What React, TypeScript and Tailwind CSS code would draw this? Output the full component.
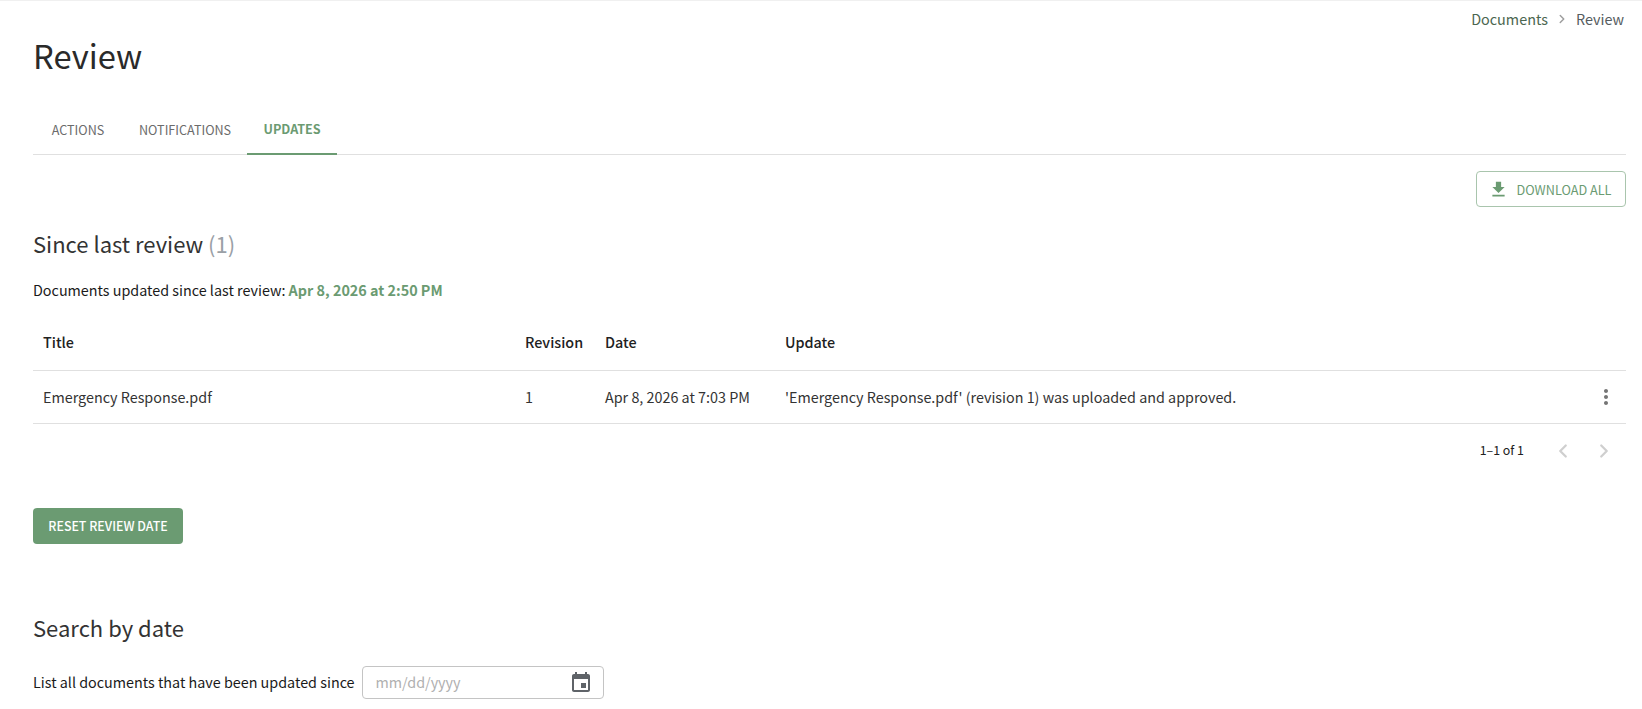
import { ChevronLeft, ChevronRight } from 'lucide-react'

const font = { fontFamily: '"Noto Sans CJK SC", "Source Sans Pro", sans-serif' }

function DownloadIcon() {
  return (
    <svg viewBox="0 0 24 24" className="w-[21px] h-[21px] fill-[#6b9b72]">
      <path d="M19 9h-4V3H9v6H5l7 7 7-7zM5 18v2h14v-2H5z" />
    </svg>
  )
}

function CalendarIcon() {
  return (
    <svg viewBox="0 0 24 24" className="w-6 h-6 fill-[#5f6368]">
      <path d="M19 4h-1V2h-2v2H8V2H6v2H5c-1.11 0-2 .9-2 2v14c0 1.1.89 2 2 2h14c1.1 0 2-.9 2-2V6c0-1.1-.9-2-2-2zm0 16H5V9h14v11zm-7-7h5v5h-5v-5z" />
    </svg>
  )
}

function DotsIcon() {
  return (
    <svg viewBox="0 0 24 24" className="w-6 h-6 fill-[#757575]">
      <path d="M12 8c1.1 0 2-.9 2-2s-.9-2-2-2-2 .9-2 2 .9 2 2 2zm0 2c-1.1 0-2 .9-2 2s.9 2 2 2 2-.9 2-2-.9-2-2-2zm0 6c-1.1 0-2 .9-2 2s.9 2 2 2 2-.9 2-2-.9-2-2-2z" />
    </svg>
  )
}

export default function App() {
  return (
    <div className="h-[709px] overflow-hidden bg-white border-t border-[#f0f0f0] pl-[33px] pr-4 text-[#212121]" style={font}>
      <div className="flex justify-end items-center gap-[7px] h-[36px] text-[14.4px] pr-[2px]">
        <span className="text-[#4b6650]">Documents</span>
        <ChevronRight size={14} strokeWidth={2.5} className="text-[#9e9e9e]" />
        <span className="text-[#555c60]">Review</span>
      </div>

      <h1 className="text-[32.7px] leading-[36px] font-normal text-[#2a2a2a]">Review</h1>

      <div className="mt-[33px] flex h-[49px] border-b border-[#e0e0e0] text-[12.6px] uppercase">
        <div className="w-[90px] flex items-center justify-center text-[#6b6b6b]">Actions</div>
        <div className="px-4 flex items-center text-[#6b6b6b]">Notifications</div>
        <div className="w-[90px] flex items-center justify-center font-semibold text-[#6b9b72] border-b-2 border-[#6b9b72] -mb-px">Updates</div>
      </div>

      <div className="flex justify-end mt-4">
        <button className="w-[150px] h-9 pr-[3px] pt-px flex items-center justify-center gap-[8px] border border-[#a9c5ad] rounded text-[12.7px] text-[#6b9b72] uppercase">
          <DownloadIcon />
          Download all
        </button>
      </div>

      <h2 className="mt-[18px] text-[22px] leading-[36px] font-normal text-[#333]">
        Since last review <span className="text-[#9aa0a6]">(1)</span>
      </h2>

      <p className="mt-[17px] text-[14.35px] leading-6 text-[#1a1a1a]">
        Documents updated since last review: <span className="font-bold text-[#6b9b72]">Apr 8, 2026 at 2:50 PM</span>
      </p>

      <table className="mt-[15px] w-full table-fixed text-[14.35px] text-left">
        <thead>
          <tr className="h-[53px] border-b border-[#e0e0e0]">
            <th className="w-[492px] pl-[10px] pb-[2px] font-medium">Title</th>
            <th className="w-[80px] pb-[2px] font-medium">Revision</th>
            <th className="w-[180px] pb-[2px] font-medium">Date</th>
            <th className="pb-[2px] font-medium">Update</th>
            <th className="w-[56px]"></th>
          </tr>
        </thead>
        <tbody>
          <tr className="h-[53px] border-b border-[#e0e0e0] text-[#333]">
            <td className="pl-[10px]">Emergency Response.pdf</td>
            <td>1</td>
            <td>Apr 8, 2026 at 7:03 PM</td>
            <td>'Emergency Response.pdf' (revision 1) was uploaded and approved.</td>
            <td>
              <div className="flex justify-end pr-[8px]">
                <DotsIcon />
              </div>
            </td>
          </tr>
        </tbody>
      </table>

      <div className="flex justify-end items-center h-[54px] text-[12.4px] text-[#212121]">
        <span className="mr-[28px]">1–1 of 1</span>
        <ChevronLeft size={22} strokeWidth={2.5} className="text-[#cfcfcf] mr-[19px]" />
        <ChevronRight size={22} strokeWidth={2.5} className="text-[#cfcfcf] mr-[11px]" />
      </div>

      <button className="mt-[30px] w-[150px] h-9 pt-px rounded bg-[#6b9b72] text-white text-[12.4px] font-medium uppercase">Reset review date</button>

      <h2 className="mt-[65px] text-[22px] leading-[36px] font-normal text-[#333]">Search by date</h2>

      <div className="mt-[21px] flex items-center gap-[7px] text-[14.35px] text-[#1a1a1a]">
        <span>List all documents that have been updated since</span>
        <div className="w-[242px] h-[33px] border border-[#c4c4c4] rounded flex items-center justify-between pl-[13px] pr-[10px]">
          <span className="text-[#b0b0b0]">mm/dd/yyyy</span>
          <CalendarIcon />
        </div>
      </div>
    </div>
  )
}
